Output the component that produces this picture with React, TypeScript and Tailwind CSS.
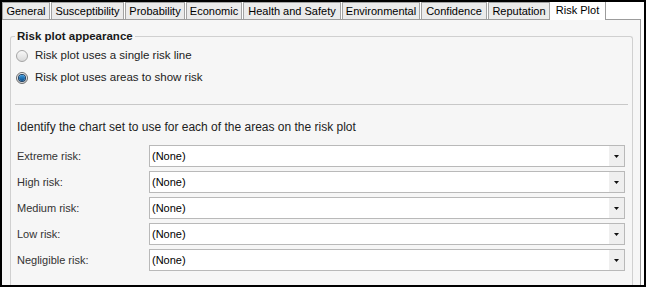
const tabs = [
  { label: 'General', w: 'w-[48px]' },
  { label: 'Susceptibility', w: 'w-[73px]' },
  { label: 'Probability', w: 'w-[60px]' },
  { label: 'Economic', w: 'w-[56px]' },
  { label: 'Health and Safety', w: 'w-[98px]' },
  { label: 'Environmental', w: 'w-[78px]' },
  { label: 'Confidence', w: 'w-[66px]' },
  { label: 'Reputation', w: 'w-[62px]' },
];

const areas = ['Extreme risk:', 'High risk:', 'Medium risk:', 'Low risk:', 'Negligible risk:'];

function Radio({ checked, label }: { checked?: boolean; label: string }) {
  return (
    <label className="flex h-[22px] items-center gap-[7px] pl-[1px]">
      <span
        className={
          checked
            ? 'flex h-[12px] w-[12px] items-center justify-center rounded-full border border-[#6b6b6b] bg-gradient-to-b from-[#f4f4f4] to-[#d8d8d8]'
            : 'h-[12px] w-[12px] rounded-full border border-[#a5a5a5] bg-gradient-to-b from-[#f8f8f8] to-[#dadada]'
        }
      >
        {checked && <span className="h-[6px] w-[6px] rounded-full bg-gradient-to-b from-[#3a9be0] to-[#0a4f8c] ring-1 ring-[#1d3f63]" />}
      </span>
      <span className="text-[11.5px] text-[#222]">{label}</span>
    </label>
  );
}

function Select() {
  return (
    <div className="flex h-[22px] w-[476px] items-stretch border border-[#b9b9b9] bg-white">
      <div className="flex flex-1 items-center pl-[2px] text-black">(None)</div>
      <div className="flex w-[15px] items-center justify-center bg-[#efefef]">
        <svg width="5" height="3" viewBox="0 0 5 3">
          <polygon points="0,0 5,0 2.5,3" fill="#111" />
        </svg>
      </div>
    </div>
  );
}

export default function App() {
  return (
    <div className="flex h-[287px] w-[646px] flex-col overflow-hidden border-2 border-black bg-white font-['Liberation_Sans',Arial,sans-serif] text-[11px]">
      <div className="flex h-[17px] gap-[1px] whitespace-nowrap">
        {tabs.map((t) => (
          <div
            key={t.label}
            className={`flex ${t.w} items-center justify-center border-x border-t border-[#a3a3a3] bg-[#ebebeb] text-black`}
          >
            {t.label}
          </div>
        ))}
        <div className="relative z-10 -ml-[1px] -mb-px flex h-[18px] w-[56px] items-center justify-center border-r border-[#9c9c9c] bg-white pb-[2px] text-black">
          Risk Plot
        </div>
      </div>
      <div className="mr-[3px] flex-1 border-t border-r border-[#9c9c9c] bg-[#f6f6f6] pl-[8px] pr-[7px] pt-[16px]">
        <div className="relative h-full rounded-t-[3px] border-x border-t border-[#d0d0d0] px-[4px] pt-[8px]">
          <div className="absolute left-[4px] top-[-9px] bg-[#f6f6f6] px-[2px] text-[11.5px] font-bold text-[#1a1a1a]">
            Risk plot appearance
          </div>
          <Radio label="Risk plot uses a single risk line" />
          <Radio checked label="Risk plot uses areas to show risk" />
          <div className="mt-[15px] h-px bg-[#c8c8c8]" />
          <div className="mt-[14px] flex h-[16px] items-center pl-[2px] text-[12px] text-[#222]">
            Identify the chart set to use for each of the areas on the risk plot
          </div>
          <div className="mt-[10px] flex flex-col gap-[4px]">
            {areas.map((a) => (
              <div key={a} className="flex items-center">
                <div className="w-[134px] pl-[2px] text-[#333]">{a}</div>
                <Select />
              </div>
            ))}
          </div>
        </div>
      </div>
    </div>
  );
}
